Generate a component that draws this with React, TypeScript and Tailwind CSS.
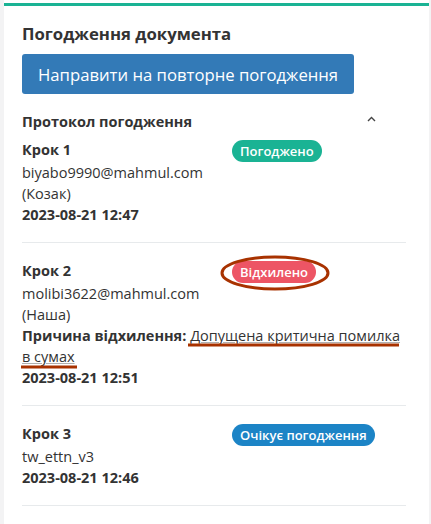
import React from 'react';

// Кроки протоколу погодження
interface Step {
    title: string;
    user: string;
    org?: string;
    reason?: string;
    date: string;
    status: 'ok' | 'rejected' | 'pending';
}

const steps: Step[] = [
    { title: 'Крок 1', user: 'biyabo9990@mahmul.com', org: '(Козак)', date: '2023-08-21 12:47', status: 'ok' },
    {
        title: 'Крок 2',
        user: 'molibi3622@mahmul.com',
        org: '(Наша)',
        reason: 'Допущена критична помилка в сумах',
        date: '2023-08-21 12:51',
        status: 'rejected',
    },
    { title: 'Крок 3', user: 'tw_ettn_v3', date: '2023-08-21 12:46', status: 'pending' },
];

const Badge: React.FC<{ status: Step['status'] }> = ({ status }) => {
    if (status === 'ok') {
        return <span className="inline-block rounded-full bg-[#1ab394] px-[8px] text-[13px] font-semibold leading-[22px] text-white">Погоджено</span>;
    }
    if (status === 'rejected') {
        return <span className="inline-block rounded-full bg-[#ed5565] px-[8px] text-[13px] font-semibold leading-[22px] text-white">Відхилено</span>;
    }
    return <span className="inline-block rounded-full bg-[#1c84c6] px-[8px] text-[13px] font-semibold leading-[22px] text-white">Очікує погодження</span>;
};

const StepRow: React.FC<{ step: Step }> = ({ step }) => (
    <div className="border-b border-[#e7eaec] pt-[17px] pb-[17px]">
        <div className="grid grid-cols-[210px_1fr]">
            <div>
                <div className="font-bold mb-[2px]">{step.title}</div>
                <div>{step.user}</div>
                {step.org && <div>{step.org}</div>}
            </div>
            <div className="pt-[1px]">
                <Badge status={step.status} />
            </div>
        </div>
        {step.reason && (
            <div>
                <span className="font-bold">Причина відхилення: </span>
                <span className="underline decoration-[#b0b0b0]">{step.reason}</span>
            </div>
        )}
        <div className="font-bold">{step.date}</div>
    </div>
);

export default function App() {
    return (
        <div
            className="relative min-h-screen bg-[#f3f3f4] pl-[4px] pr-[2px] text-[14.5px] leading-[21px] text-[#333]"
            style={{ fontFamily: '"Open Sans", "Noto Sans", sans-serif' }}
        >
            <div className="min-h-[524px] bg-white pt-[3px]">
                <div className="border-t-[3px] border-[#1ab394] pl-[18px] pr-[23px]">
                    <h2 className="pt-[16px] text-[16.75px] font-bold leading-[24px] text-[#333]">Погодження документа</h2>
                    <div className="mt-[8px]">
                        <button className="h-[40px] rounded-[3px] bg-[#337ab7] px-[16px] text-[16.7px] text-white">
                            Направити на повторне погодження
                        </button>
                    </div>
                    <div className="mt-[17px] flex items-center justify-between pr-[30px]">
                        <span className="font-bold">Протокол погодження</span>
                        <svg width="9" height="6" viewBox="0 0 9 6" className="-mt-[6px]">
                            <polyline points="1,5 4.5,1.5 8,5" fill="none" stroke="#444" strokeWidth="1.4" />
                        </svg>
                    </div>
                    <div className="-mt-[10px]">
                        {steps.map((s) => (
                            <StepRow key={s.title} step={s} />
                        ))}
                    </div>
                </div>
            </div>

            {/* Позначки поверх скриншота */}
            <svg className="pointer-events-none absolute left-0 top-0" width="431" height="524">
                <ellipse cx="275" cy="273" rx="53" ry="16" fill="none" stroke="#a83200" strokeWidth="3" />
                <line x1="188" y1="345" x2="399" y2="345" stroke="#a83200" strokeWidth="3" />
                <line x1="21" y1="367" x2="77" y2="367" stroke="#a83200" strokeWidth="3" />
            </svg>
        </div>
    );
}
